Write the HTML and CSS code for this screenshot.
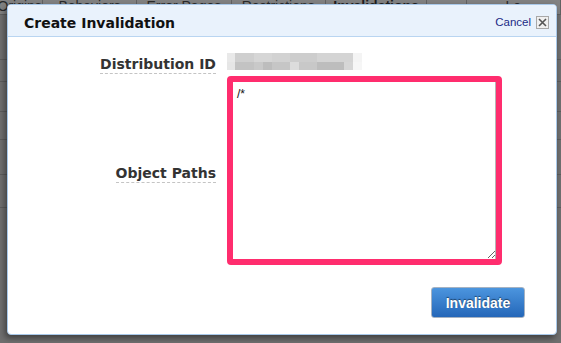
FILE: index.html
```html
<!DOCTYPE html>
<html lang="en">
<head>
    <meta charset="UTF-8">
    <meta name="viewport" content="width=device-width, initial-scale=1.0">
    <title>Create Invalidation</title>
    <link rel="stylesheet" href="styles.css">
</head>
<body>
    <div class="page">
        <div class="tabs">
            <div class="tab tab-first">Origins</div>
            <div class="tab">Behaviors</div>
            <div class="tab">Error Pages</div>
            <div class="tab">Restrictions</div>
            <div class="tab active">Invalidations</div>
            <div class="tab tab-small">Tags</div>
            <div class="tab">Le</div>
        </div>
        <div class="rows">
            <div class="row r1"></div>
            <div class="row r2"></div>
            <div class="row r3"></div>
            <div class="row r4"></div>
            <div class="row r5"></div>
            <div class="row r6"></div>
        </div>
    </div>

    <div class="modal">
        <div class="modal-header">
            <div class="modal-title">Create Invalidation</div>
            <div class="modal-actions">
                <a class="cancel" href="#">Cancel</a>
                <span class="close">
                    <svg width="9" height="9" viewBox="0 0 9 9"><path d="M1 1 L8 8 M8 1 L1 8" stroke="#555" stroke-width="1.6"/></svg>
                </span>
            </div>
        </div>
        <div class="modal-body">
            <div class="form">
                <div class="label-cell"><span class="label">Distribution ID</span></div>
                <div class="field-cell">
                    <div class="blurred">
                        <div class="blur-row top"></div>
                        <div class="blur-row bottom"></div>
                    </div>
                </div>
                <div class="label-cell center"><span class="label">Object Paths</span></div>
                <div class="field-cell">
                    <textarea class="paths">/*</textarea>
                </div>
            </div>
            <div class="footer">
                <button class="btn-primary">Invalidate</button>
            </div>
        </div>
    </div>
</body>
</html>
```

FILE: styles.css
```css
body {
    margin: 0;
    width: 561px;
    height: 343px;
    overflow: hidden;
    background-color: #6f6f6f;
    font-family: "DejaVu Sans", Verdana, sans-serif;
}

/* page behind the overlay */
.page {
    height: 100%;
}
.tabs {
    display: flex;
    margin-top: -2px;
    height: 16px;
    background: #828282;
    border-bottom: 1px solid #5f5f5f;
    font-family: "Liberation Sans", Arial, sans-serif;
    font-size: 14px;
    color: #2a2a2a;
}
.tab {
    width: 107px;
    text-align: center;
    border-right: 1px solid #626262;
    line-height: 16px;
}
.tab-first {
    width: 48px;
    text-align: right;
    direction: rtl;
    overflow: hidden;
}
.tab.active {
    width: 115px;
    font-weight: bold;
    color: #1e1e1e;
}
.tab-small {
    width: 44px;
    color: transparent;
}
.rows {
    display: flex;
    flex-direction: column;
}
.row {
    border-bottom: 1px solid #5d5d5d;
}
.r1 { height: 44px; }
.r2 { height: 21px; }
.r3 { height: 29px; }
.r4 { height: 27px; }
.r5 { height: 34px; }
.r6 { height: 32px; }

/* dialog */
.modal {
    position: absolute;
    left: 7px;
    top: 4px;
    width: 548px;
    height: 329px;
    background: #fff;
    border: 1px solid #a9c9ea;
    border-radius: 4px;
    box-shadow: -2px 3px 6px rgba(0, 0, 0, 0.45);
    overflow: hidden;
}
.modal-header {
    display: flex;
    justify-content: space-between;
    align-items: center;
    height: 31px;
    padding: 0 7px 0 16px;
    background: #e9f2fc;
    border-bottom: 1px solid #b9d5f1;
}
.modal-title {
    font-size: 14px;
    font-weight: bold;
    color: #111;
    margin-top: 4px;
}
.modal-actions {
    display: flex;
    align-items: center;
    gap: 5px;
    margin-top: 3px;
}
.cancel {
    font-family: "Liberation Sans", Arial, sans-serif;
    font-size: 11.5px;
    color: #1b2b86;
    text-decoration: none;
}
.close {
    display: flex;
    justify-content: center;
    align-items: center;
    width: 11px;
    height: 11px;
    background: #f0f0f0;
    border: 1px solid #a8a8a8;
}

.modal-body {
    display: flex;
    flex-direction: column;
}
.form {
    display: grid;
    grid-template-columns: 208px 275px;
    column-gap: 11px;
    row-gap: 2px;
    padding-top: 19px;
}
.label-cell {
    display: flex;
    justify-content: flex-end;
    align-items: flex-start;
}
.label-cell.center {
    align-items: center;
    padding-top: 3px;
}
.label {
    font-size: 14px;
    font-weight: bold;
    line-height: 17px;
    color: #333;
    border-bottom: 1px dashed #c4c4c4;
}
.blurred {
    width: 135px;
    height: 17px;
    margin-top: -3px;
    display: flex;
    flex-direction: column;
}
.blur-row {
    height: 8.5px;
}
.blur-row.top {
    background: linear-gradient(to right,
        #e9e9e9 0 8px, #cfcfcf 8px 27px, #d6d6d6 27px 45px,
        #d2d2d2 45px 63px, #cdcdcd 63px 90px, #d4d4d4 90px 126px, #f4f4f4 126px);
}
.blur-row.bottom {
    background: linear-gradient(to right,
        #e6e6e6 0 8px, #c3c3c3 8px 27px, #c9c9c9 27px 36px, #bdbdbd 36px 45px,
        #c6c6c6 45px 63px, #dcdcdc 63px 72px, #c8c8c8 72px 90px,
        #bdbdbd 90px 117px, #d6d6d6 117px 126px, #f6f6f6 126px);
}
.paths {
    box-sizing: border-box;
    width: 275px;
    height: 189px;
    margin: 0;
    padding: 5px 4px;
    border: 6px solid #ff2d6e;
    border-radius: 4px;
    box-shadow: inset -1px 0 0 #b5b5b5;
    outline: none;
    font-family: "Liberation Sans", Arial, sans-serif;
    font-size: 12px;
    color: #111;
    resize: both;
}
.footer {
    display: flex;
    justify-content: flex-end;
    padding: 18px 31px 0 0;
}
.btn-primary {
    width: 94px;
    height: 31px;
    border: 1px solid #a5b2c2;
    border-radius: 3px;
    background: linear-gradient(#4c95de, #2467b9);
    color: #fff;
    font-family: "Liberation Sans", Arial, sans-serif;
    font-size: 14px;
    font-weight: bold;
    text-shadow: 0 -1px 1px rgba(0, 0, 0, 0.5);
    cursor: pointer;
}
```
